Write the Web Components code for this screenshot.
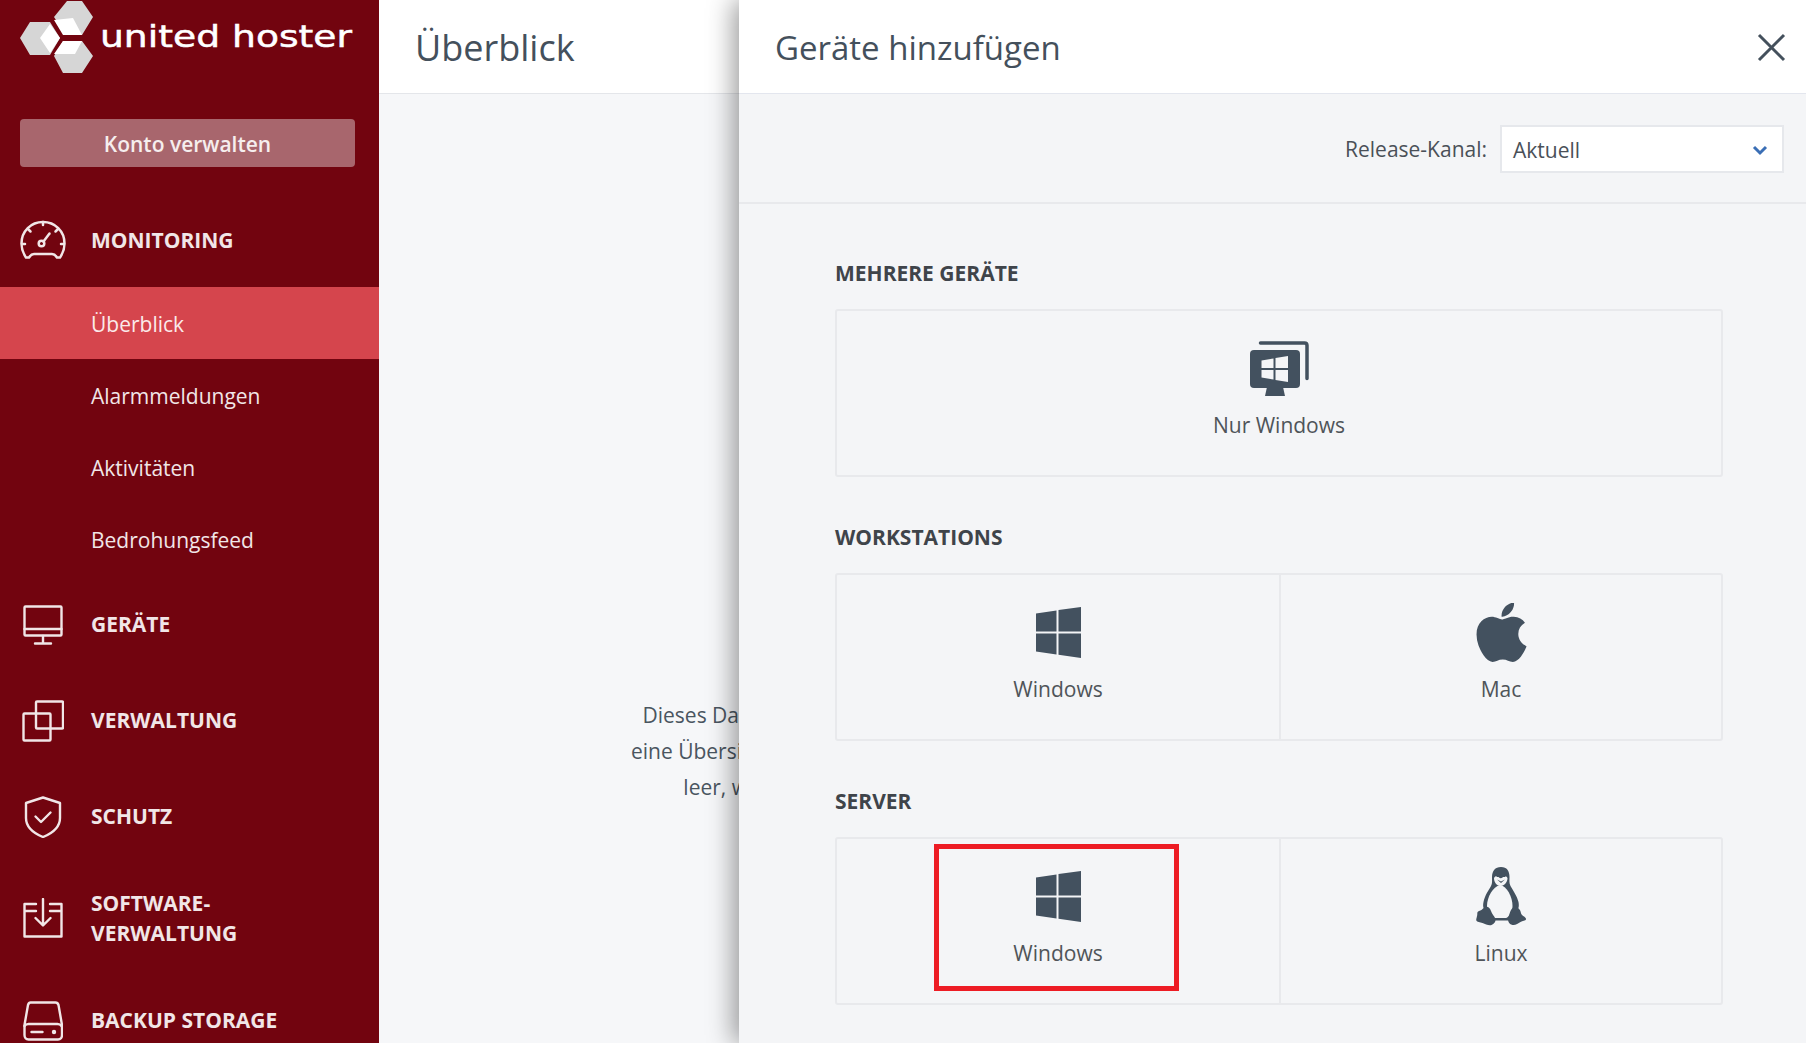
<!DOCTYPE html>
<html lang="de">
<head>
<meta charset="utf-8">
<title>Geräte hinzufügen</title>
<style>
  html, body { margin: 0; height: 100%; overflow: hidden; }
  body { font-family: "Open Sans", "Liberation Sans", sans-serif; }
</style>
</head>
<body>
<app-shell>
  <side-bar slot="side">
    <nav-group icon="gauge" label="MONITORING" short>
      <nav-item active>Überblick</nav-item>
      <nav-item>Alarmmeldungen</nav-item>
      <nav-item>Aktivitäten</nav-item>
      <nav-item>Bedrohungsfeed</nav-item>
    </nav-group>
    <nav-group icon="monitor" label="GERÄTE"></nav-group>
    <nav-group icon="copy" label="VERWALTUNG"></nav-group>
    <nav-group icon="shield" label="SCHUTZ"></nav-group>
    <nav-group icon="install" label="SOFTWARE-<br>VERWALTUNG" tall></nav-group>
    <nav-group icon="drive" label="BACKUP STORAGE" last></nav-group>
  </side-bar>
  <over-view slot="main"></over-view>
  <add-panel slot="panel">
    <device-section title="MEHRERE GERÄTE">
      <device-card icon="multi">Nur Windows</device-card>
    </device-section>
    <device-section title="WORKSTATIONS">
      <device-card icon="windows">Windows</device-card>
      <device-card icon="apple">Mac</device-card>
    </device-section>
    <device-section title="SERVER">
      <device-card icon="windows" marked>Windows</device-card>
      <device-card icon="linux">Linux</device-card>
    </device-section>
  </add-panel>
</app-shell>

<script>
const ICONS = {
  gauge: `<svg width="46" height="40" viewBox="0 0 46 40" fill="none" stroke="currentColor" stroke-width="2.500" stroke-linecap="round" stroke-linejoin="round">
    <path d="M6 37.500C3 33 1.500 28 1.500 23.500 1.500 11 11 2 23 2s21.500 9 21.500 21.500c0 4.500-1.500 9.500-4.500 14h-3c-1.500-2.500-3-3.500-5-3.500H14c-2 0-3.500 1-5 3.500z"/>
    <path d="M23 2v3M8 9l2.500 2.500M38 9l-2.500 2.500M2 24h3M41 24h3"/>
    <circle cx="21.500" cy="23.500" r="2.800"/><path d="M23.500 21.500l6-8"/></svg>`,
  monitor: `<svg width="40" height="40" viewBox="0 0 40 40" fill="none" stroke="currentColor" stroke-width="2.400" stroke-linecap="round" stroke-linejoin="round">
    <rect x="1.500" y="1.500" width="37" height="29" rx="1"/><path d="M1.500 24h37M20 31v7M12 38.500h16"/></svg>`,
  copy: `<svg width="42" height="42" viewBox="0 0 42 42" fill="none" stroke="currentColor" stroke-width="2.400" stroke-linejoin="round">
    <rect x="14" y="1.500" width="27" height="27" rx="1"/><rect x="1.500" y="13.500" width="27" height="27" rx="1"/></svg>`,
  shield: `<svg width="38" height="42" viewBox="0 0 38 42" fill="none" stroke="currentColor" stroke-width="2.400" stroke-linecap="round" stroke-linejoin="round">
    <path d="M19 1.500l17 5.500v15c0 9-7 15-17 19C9 37 2 31 2 22V7z"/><path d="M11.500 20.500l5.500 5.500 9.500-9.500"/></svg>`,
  install: `<svg width="40" height="40" viewBox="0 0 40 40" fill="none" stroke="currentColor" stroke-width="2.400" stroke-linecap="round" stroke-linejoin="round">
    <path d="M13 6H1.500v32.500h37V6H27M1.500 13H13M27 13h11.500M20 1v26M12.500 20l7.500 7.500 7.500-7.500"/></svg>`,
  drive: `<svg width="40" height="40" viewBox="0 0 40 40" fill="none" stroke="currentColor" stroke-width="2.400" stroke-linecap="round" stroke-linejoin="round">
    <path d="M7.500 1.500h25c1.500 0 2.500 1 3 2.500l3.500 20v10c0 2.500-1.500 4.500-4 4.500H5.500c-2.500 0-4-2-4-4.500V24L5 4c.5-1.500 1-2.500 2.500-2.500z"/><path d="M1.500 25c1-1.500 2.500-2 4-2h29c1.500 0 3 .5 4 2M8.500 31h11"/><circle cx="31" cy="31" r="1" fill="currentColor"/></svg>`,
  windows: `<svg width="45" height="51" viewBox="0 0 45 51" fill="currentColor">
    <path d="M0 6.500L20.500 3.500V24.500H0zM22.500 3L45 0V24.500H22.500zM0 26.500H20.500V47.500L0 44.500zM22.500 26.500H45V51L22.500 47.800z"/></svg>`,
  multi: `<svg width="59" height="55" viewBox="0 0 59 55">
    <path fill="none" stroke="currentColor" stroke-width="3.500" stroke-linecap="round" d="M10.500 2h44c1.500 0 2.500 1 2.500 2.500v33"/>
    <rect x="0" y="9" width="50" height="38" rx="4" fill="currentColor"/><path fill="currentColor" d="M17 46h16l2 9H15z"/>
    <path fill="#f4f5f7" d="M11.500 19.500l12-2V27h-12zM25.500 17l12.500-2v12H25.500zM11.500 29h12v9.500l-12-2zM25.500 29H38v12l-12.500-2z"/></svg>`,
  apple: `<svg width="51" height="59" viewBox="0 0 384 444" fill="currentColor"><g transform="translate(0,-36)">
    <path d="M318.700 268.700c-.2-36.700 16.400-64.400 50-84.800-18.800-26.900-47.200-41.700-84.700-44.600-35.500-2.800-74.300 20.700-88.500 20.700-15 0-49.400-19.700-76.400-19.700C63.300 141.200 4 184.800 4 273.500q0 39.300 14.400 81.200c12.800 36.700 59 126.700 107.200 125.200 25.200-.6 43-17.900 75.800-17.900 31.800 0 48.300 17.900 76.400 17.900 48.600-.7 90.400-82.500 102.600-119.300-65.200-30.700-61.700-90-61.700-91.900zm-56.600-164.200c27.300-32.400 24.800-61.900 24-72.500-24.100 1.400-52 16.400-67.900 34.900-17.500 19.800-27.800 44.300-25.600 71.900 26.100 2 49.900-11.400 69.500-34.300z"/></g></svg>`,
  linux: `<svg width="51" height="59" viewBox="0 0 51 59">
    <path fill="currentColor" d="M25 0c-6 0-9 4-9 10 0 4 .5 6-1 9-2.500 4.500-6 9-7.500 16-.6 3-.5 5 .5 7l7 10h20l7-10c1-2 1-4 .5-7-1.500-6-5.500-11.500-8-16-1.500-3-1-5.500-1-9 0-6-2.500-10-8.500-10z"/>
    <path fill="#f4f5f7" d="M24 18c-7 1.500-13 12-13 21 0 8 5 13.500 13 13.500S36.500 47 36.500 39C36.500 30 31 19 24 18z"/>
    <path fill="#f4f5f7" d="M18 11c2-3 4-2 5-.5 1 1 2.500 1 3.500 0 1.500-1.500 3-2.500 5 .5 0 4-3 8-7 8s-6.500-4-6.500-8z"/>
    <path fill="currentColor" d="M20.500 6H23v4h-2.500zM27 6h2.500v4H27zM21 12.500l4 2 4-2-4 3.500z"/>
    <path fill="currentColor" d="M9 40c3-1 5 1 6 4 1 3 3.500 5.500 4.500 8 .5 2-1 5-4 6-3 .8-6-1-9-2C4 55 1 55 .3 53.500-.2 52 1.500 49 1.300 46.500c-.2-1.500 1-2.500 3-3C6 43 7 41 9 40zM41 40c-3-1-5 1-6.500 4-1 3-2.500 6-2.500 8.500 0 2.500 1.500 5 4.500 5.500 3 .5 5.500-1.500 8-3 2-1 5-1.500 5.500-2.500.5-1.500-2-3-4-4.500-1.500-1.500-1-4-2.500-5.500-.8-.8-1.500-2-2.500-2.500z"/>
    <path fill="currentColor" d="M18 51h15v2.500H18z"/></svg>`
};

function icon(name) { return ICONS[name] || ''; }

class AppShell extends HTMLElement {
  connectedCallback() {
    this.attachShadow({ mode: 'open' }).innerHTML = `
      <style>
        :host { display: flex; height: 1043px; width: 1806px; position: relative; overflow: hidden; }
        ::slotted([slot=side]) { flex: 0 0 379px; }
        ::slotted([slot=main]) { flex: 1; min-width: 0; }
      </style>
      <slot name="side"></slot>
      <slot name="main"></slot>
      <slot name="panel"></slot>`;
  }
}

class SideBar extends HTMLElement {
  connectedCallback() {
    this.attachShadow({ mode: 'open' }).innerHTML = `
      <style>
        :host { display: block; background: #72040f; color: #f1e6e7; overflow: hidden; }
        .logo { display: flex; align-items: flex-start; height: 119px; padding-left: 20px; box-sizing: border-box; }
        .mark { flex: none; }
        .word { font: 400 31px "DejaVu Sans", sans-serif; color: #fff; margin: 18px 0 0 5px; white-space: nowrap;
                -webkit-text-stroke: .5px #fff; transform: scaleX(1.215); transform-origin: left; }
        .btn { display: flex; align-items: center; justify-content: center; margin: 0 24px 25px 20px; height: 48px;
               background: #a8666d; border-radius: 4px; font-size: 21px; font-weight: 600; color: #f6eeee; padding-top: 2px; box-sizing: border-box; }
      </style>
      <div class="logo">
        <svg class="mark" width="75" height="75" viewBox="20 0 75 75">
          <path fill="#d6d6d6" d="M54 17L67 1H82L93 17 82 35H66zM20 38L30 22H50L60 38 50 55H30zM54 56L63 41H82L93 56 82 73H63z"/>
          <path fill="#fff" d="M54 20L73 18 82 35H63zM40 38L50 24 60 38 50 53zM54 54L63 41H82L75 54z"/>
        </svg>
        <span class="word">united hoster</span>
      </div>
      <div class="btn">Konto verwalten</div>
      <slot></slot>`;
  }
}

class NavGroup extends HTMLElement {
  connectedCallback() {
    const root = this.attachShadow({ mode: 'open' });
    root.innerHTML = `
      <style>
        :host { display: block; }
        .row { display: flex; align-items: center; height: 96px; padding-left: 20px; }
        :host([short]) .row { height: 95px; }
        :host([tall]) .row { height: 106px; }
        :host([last]) .row { height: 100px; }
        .ic { flex: none; width: 46px; display: flex; justify-content: center; margin-right: 25px; }
        .ic svg { display: block; }
        .lb { font-size: 21px; line-height: 30px; font-weight: 700; margin-bottom: 2px; }
        :host([short]) .lb, :host([tall]) .lb { margin-bottom: 0; }
        :host([short]) .subs { padding-bottom: 2px; }
      </style>
      <div class="row">
        <span class="ic">${icon(this.getAttribute('icon'))}</span>
        <span class="lb">${this.getAttribute('label')}</span>
      </div>
      <div class="subs"><slot></slot></div>`;
  }
}

class NavItem extends HTMLElement {
  connectedCallback() {
    this.attachShadow({ mode: 'open' }).innerHTML = `
      <style>
        :host { display: flex; align-items: center; height: 72px; box-sizing: border-box; padding: 2px 0 0 91px; font-size: 21px; }
        :host([active]) { background: #d5454d; color: #fbeaea; }
      </style>
      <slot></slot>`;
  }
}

class OverView extends HTMLElement {
  connectedCallback() {
    this.attachShadow({ mode: 'open' }).innerHTML = `
      <style>
        :host { display: block; background: #f6f7f9; color: #4a5560; overflow: hidden; }
        header { height: 94px; box-sizing: border-box; background: #fff; border-bottom: 1px solid #e4e6ea;
                 display: flex; align-items: center; padding: 2px 0 0 36px; font-size: 36px; color: #44505c; }
        .empty { margin: 603px 1067px 0 0; text-align: right; font-size: 21px; line-height: 36px; }
        .empty div { white-space: nowrap; }
        .empty .c1 { margin-right: -3px; }
        .empty .c2 { margin-right: -9px; }
      </style>
      <header>Überblick</header>
      <div class="empty">
        <div>Dieses Da</div>
        <div class="c1">eine Übersi</div>
        <div class="c2">leer, w</div>
      </div>`;
  }
}

class AddPanel extends HTMLElement {
  connectedCallback() {
    this.attachShadow({ mode: 'open' }).innerHTML = `
      <style>
        :host { position: absolute; top: 0; right: 0; bottom: 0; width: 1067px; background: #f4f5f7; color: #4a5058;
                box-shadow: -6px 0 24px rgba(0,0,0,.38); display: block; }
        header { height: 94px; box-sizing: border-box; background: #fff; border-bottom: 1px solid #e3e6ee;
                 display: flex; align-items: center; justify-content: space-between; padding: 2px 20px 0 36px;
                 font-size: 33px; color: #44505c; }
        header svg { display: block; margin-top: -2px; }
        .bar { height: 110px; box-sizing: border-box; border-bottom: 2px solid #e8e9ec; display: flex; align-items: center;
               justify-content: flex-end; padding: 2px 22px 0 0; font-size: 21px; gap: 13px; }
        .select { width: 284px; height: 48px; box-sizing: border-box; background: #fff; border: 2px solid #e6e8ec;
                  display: flex; align-items: center; justify-content: space-between; padding: 2px 14px 0 11px; }
        .body { padding: 50px 83px 0 96px; }
      </style>
      <header>
        <span>Geräte hinzufügen</span>
        <svg width="30" height="30" viewBox="0 0 30 30" fill="none" stroke="#44505c" stroke-width="3"><path d="M3 3l25 25M28 3L3 28"/></svg>
      </header>
      <div class="bar">
        <span>Release-Kanal:</span>
        <div class="select">
          <span>Aktuell</span>
          <svg width="16" height="11" viewBox="0 0 16 11" fill="none" stroke="#3a6eb5" stroke-width="3"><path d="M2 2l6 6 6-6"/></svg>
        </div>
      </div>
      <div class="body"><slot></slot></div>`;
  }
}

class DeviceSection extends HTMLElement {
  connectedCallback() {
    this.attachShadow({ mode: 'open' }).innerHTML = `
      <style>
        :host { display: block; margin-bottom: 41px; }
        h2 { margin: 0 0 17px; font-size: 21px; line-height: 38px; font-weight: 700; color: #3f444a; }
        .cards { display: grid; grid-auto-flow: column; grid-auto-columns: 1fr; height: 168px; box-sizing: border-box;
                 border: 2px solid #e8e9ec; border-radius: 3px; }
        ::slotted(device-card:not(:first-child)) { border-left: 2px solid #e8e9ec; }
      </style>
      <h2>${this.getAttribute('title')}</h2>
      <div class="cards"><slot></slot></div>`;
    this.removeAttribute('title');
  }
}

class DeviceCard extends HTMLElement {
  connectedCallback() {
    this.attachShadow({ mode: 'open' }).innerHTML = `
      <style>
        :host { display: flex; flex-direction: column; align-items: center; position: relative; padding-top: 28px;
                font-size: 21px; color: #4f5459; }
        .ic { height: 59px; display: flex; align-items: center; color: #43515f; }
        .ic svg { display: block; }
        .lb { margin-top: 13px; line-height: 28px; }
        .mark { position: absolute; top: 5px; left: 97px; width: 245px; height: 147px; box-sizing: border-box; border: 5px solid #ed1c24; }
      </style>
      <span class="ic">${icon(this.getAttribute('icon'))}</span>
      <span class="lb"><slot></slot></span>
      ${this.hasAttribute('marked') ? '<span class="mark"></span>' : ''}`;
  }
}

customElements.define('app-shell', AppShell);
customElements.define('side-bar', SideBar);
customElements.define('nav-group', NavGroup);
customElements.define('nav-item', NavItem);
customElements.define('over-view', OverView);
customElements.define('add-panel', AddPanel);
customElements.define('device-section', DeviceSection);
customElements.define('device-card', DeviceCard);
</script>
</body>
</html>
